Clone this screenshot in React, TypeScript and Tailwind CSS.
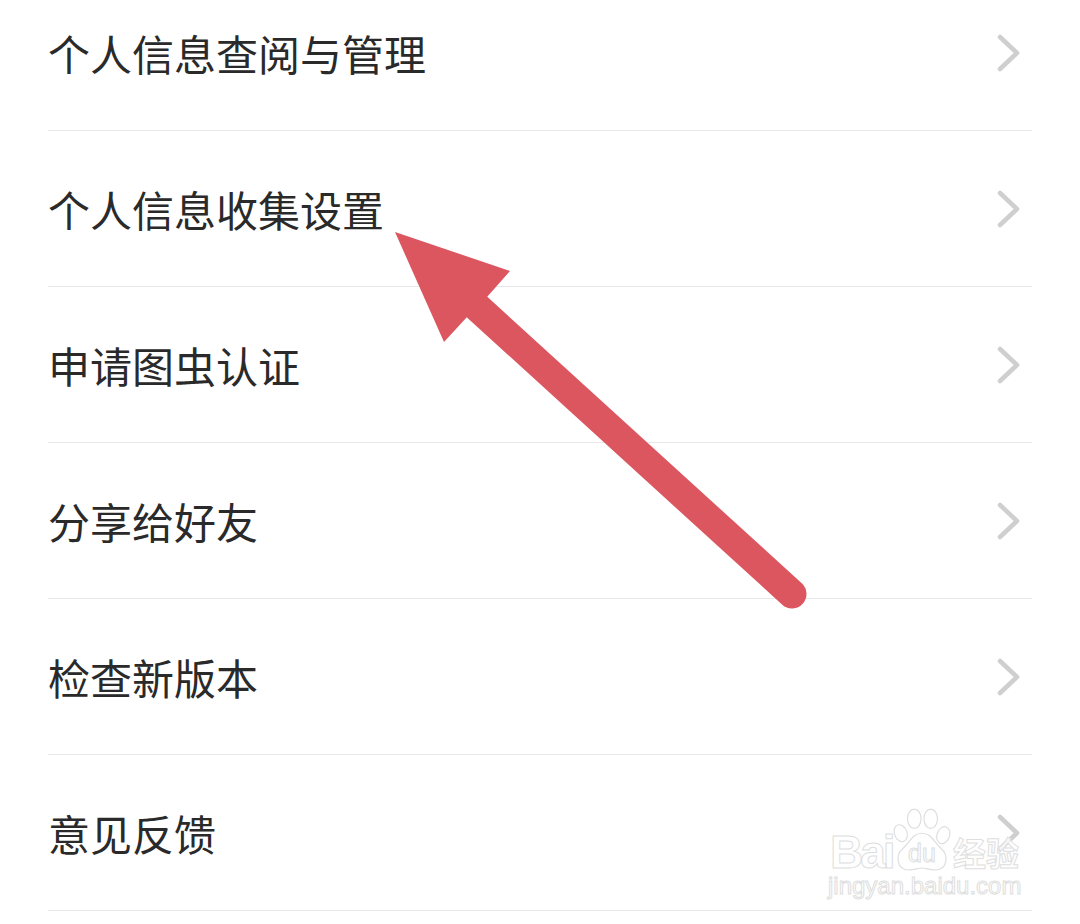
const rows = [
  "个人信息查阅与管理",
  "个人信息收集设置",
  "申请图虫认证",
  "分享给好友",
  "检查新版本",
  "意见反馈",
];

function Chevron() {
  return (
    <svg width="24" height="38" viewBox="0 0 24 38" fill="none" className="shrink-0">
      <path d="M3 3 L20 19 L3 35" stroke="#cfcfcf" strokeWidth="4.5" strokeLinecap="round" strokeLinejoin="round" />
    </svg>
  );
}

function Arrow() {
  return (
    <svg className="absolute left-[380px] top-[220px]" width="440" height="390" viewBox="380 220 440 390" fill="none">
      <path d="M477 307 L792 594" stroke="#dc5660" strokeWidth="29" strokeLinecap="round" />
      <path d="M395 232 L510 271 L487 297 L467 317 L444 342 Z" fill="#dc5660" />
    </svg>
  );
}

const outlined = { WebkitTextStroke: "1px #dedede", color: "rgba(255,255,255,0.8)" } as const;

function Paw() {
  return (
    <div className="relative w-[58px] h-[64px] shrink-0">
      <svg width="58" height="64" viewBox="0 0 60 66" fill="rgba(255,255,255,0.8)" stroke="#dedede" strokeWidth="1.2">
        <ellipse cx="8" cy="26" rx="6.5" ry="9" transform="rotate(-20 8 26)" />
        <ellipse cx="22" cy="11" rx="7" ry="10" />
        <ellipse cx="39" cy="11" rx="7" ry="10" />
        <ellipse cx="52" cy="28" rx="6.5" ry="9" transform="rotate(20 52 28)" />
        <path d="M30 26 C40 26 42 35 50 42 C58 49 56 64 44 64 C38 64 34 62 30 62 C26 62 22 64 16 64 C4 64 2 49 10 42 C18 35 20 26 30 26 Z" />
      </svg>
      <div className="absolute inset-0 flex items-end justify-center pb-[4px]">
        <span className="text-[25px] leading-[30px] font-['Liberation_Sans',sans-serif]" style={outlined}>du</span>
      </div>
    </div>
  );
}

function Watermark() {
  return (
    <div className="absolute left-[828px] top-[808px] flex flex-col">
      <div className="flex items-end pl-[2px] gap-[1px]">
        <span className="text-[46px] leading-[40px] font-bold tracking-[-3px] font-['Liberation_Sans',sans-serif] w-[62px]" style={outlined}>Bai</span>
        <Paw />
        <span className="ml-[1px] text-[33px] leading-[40px] font-bold whitespace-nowrap font-['Noto_Sans_CJK_SC',sans-serif]" style={outlined}>经验</span>
      </div>
      <span className="text-[24px] leading-[28px] whitespace-nowrap font-['Liberation_Sans',sans-serif]" style={outlined}>jingyan.baidu.com</span>
    </div>
  );
}

export default function App() {
  return (
    <div className="relative w-[1080px] h-[924px] overflow-hidden bg-white font-['Noto_Sans_CJK_SC',sans-serif]">
      <ul className="mt-[-25px] mx-[48px]">
        {rows.map((r) => (
          <li key={r} className="h-[156px] flex items-center justify-between border-b-[1.5px] border-[#e8e8e8] pr-[11px]">
            <span className="text-[42px] leading-[56px] text-[#2a2a2a]">{r}</span>
            <Chevron />
          </li>
        ))}
      </ul>
      <Arrow />
      <Watermark />
    </div>
  );
}
